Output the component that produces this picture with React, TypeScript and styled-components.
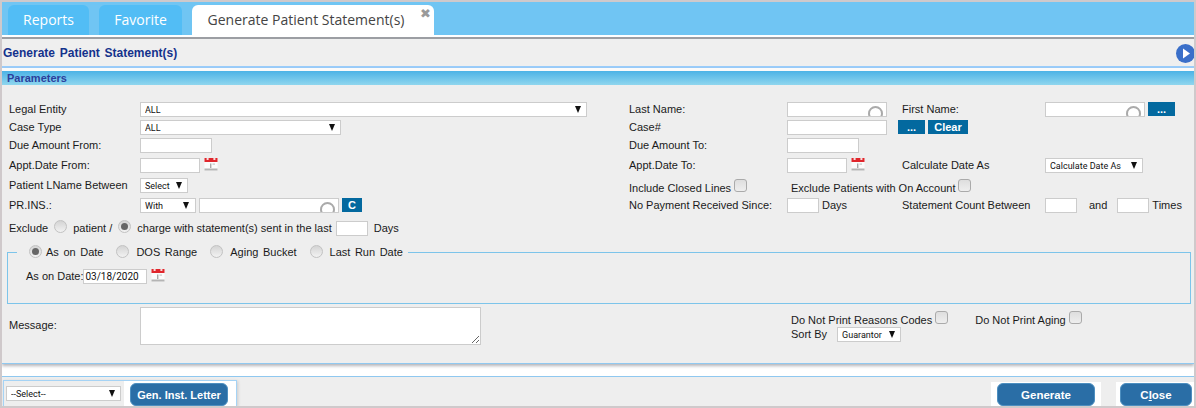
import React from "react";
import styled, { createGlobalStyle } from "styled-components";

const Global = createGlobalStyle`
  html, body { margin: 0; padding: 0; background: #fff; }
  * { box-sizing: border-box; }
`;

const sans = `"Liberation Sans", Arial, sans-serif`;

const Page = styled.div`
  width: 1196px;
  height: 408px;
  overflow: hidden;
  display: flex;
  flex-direction: column;
  background: #fff;
  border-style: solid;
  border-color: #cfc9cb;
  border-width: 2px;
  font-family: ${sans};
  font-size: 11px;
  color: #1a1a1a;
`;

const TabBar = styled.div`
  height: 33px;
  flex: none;
  display: flex;
  align-items: flex-end;
  gap: 10px;
  padding-left: 6px;
  background: #70c5f3;
`;

const Tab = styled.div<{ $active?: boolean; $w: number }>`
  position: relative;
  width: ${(p) => p.$w}px;
  height: 30px;
  padding: 0 ${(p) => (p.$active ? 14 : 0)}px 2px 0;
  display: flex;
  align-items: center;
  justify-content: center;
  border-radius: 6px 6px 0 0;
  background: ${(p) => (p.$active ? "#fff" : "#52bdf5")};
  color: ${(p) => (p.$active ? "#444" : "#fff")};
  font-family: "Open Sans", sans-serif;
  font-size: 14px;
`;

const TabClose = styled.span`
  position: absolute;
  right: 3px;
  top: 1px;
  color: #9a9a9a;
  font-size: 13px;
  font-weight: 700;
  font-family: "DejaVu Sans", sans-serif;
`;

const Rule = styled.div`
  height: 4px;
  flex: none;
  background: linear-gradient(#fff 0 2px, #9c9ea3 2px 4px);
`;

const TitleBar = styled.div`
  height: 29px;
  flex: none;
  display: flex;
  align-items: center;
  justify-content: space-between;
  background: #efefef;
  border-bottom: 2px solid #9bcdfb;
  color: #14328c;
  font-size: 12px;
  font-weight: 700;
  word-spacing: 1.4px;
  padding-left: 1px;
`;

const PlayIcon = styled.svg`
  width: 19px;
  height: 19px;
  margin-right: -1px;
  margin-top: 1px;
`;

const Panel = styled.div`
  height: 296px;
  flex: none;
  background: #eee;
  border-top: 3px solid #fafafa;
  border-bottom: 1px solid #8fc8f0;
  box-shadow: 0 2px 3px rgba(120, 120, 130, 0.55);
  position: relative;
`;

const SectionBar = styled.div`
  height: 14px;
  margin-bottom: 17px;
  padding-left: 5px;
  display: flex;
  align-items: center;
  background: linear-gradient(#4cb3e6, #8fd6ee);
  color: #2b3f9c;
  font-size: 11px;
  font-weight: 700;
`;

const Row = styled.div<{ $h: number }>`
  height: ${(p) => p.$h}px;
  margin-left: 7px;
  display: grid;
  grid-template-columns: 131px 489px 158px 115px 143px 1fr;
  align-items: start;
`;

const Cell = styled.div<{ $span?: number }>`
  grid-column: span ${(p) => p.$span ?? 1};
  display: flex;
  align-items: flex-start;
  gap: 3px;
  min-height: 15px;
`;

const Label = styled.span`
  line-height: 15px;
  white-space: nowrap;
`;

const InputBox = styled.input<{ $w: number; $h?: number }>`
  width: ${(p) => p.$w}px;
  height: ${(p) => p.$h ?? 15}px;
  flex: none;
  padding: 0 1px;
  background: #fff;
  border: 1px solid #ccc;
  outline: none;
  font-family: "Roboto", sans-serif;
  font-size: 10px;
  color: #111;
`;

const SearchWrap = styled.div<{ $w: number }>`
  position: relative;
  width: ${(p) => p.$w}px;
  height: 15px;
  flex: none;
  overflow: hidden;
  background: #fff;
  border: 1px solid #ccc;
  &::after {
    content: "";
    position: absolute;
    right: 3px;
    top: 3px;
    width: 11px;
    height: 11px;
    border: 2px solid #aaa;
    border-radius: 50%;
  }
`;

const SelectWrap = styled.div<{ $w: number; $arrow?: number }>`
  position: relative;
  width: ${(p) => p.$w}px;
  height: 15px;
  flex: none;
  background: #fff;
  border: 1px solid #ccc;
  &::after {
    content: "";
    position: absolute;
    right: ${(p) => p.$arrow ?? 5}px;
    top: 3px;
    border-left: 3.5px solid transparent;
    border-right: 3.5px solid transparent;
    border-top: 7px solid #111;
    pointer-events: none;
  }
`;

const NativeSelect = styled.select`
  appearance: none;
  width: 100%;
  height: 13px;
  display: block;
  border: 0;
  background: transparent;
  padding: 0 0 0 4px;
  outline: none;
  font-family: "Roboto", sans-serif;
  font-size: 9px;
  color: #111;
`;

const SquareButton = styled.button<{ $w: number }>`
  width: ${(p) => p.$w}px;
  height: 14px;
  flex: none;
  padding: 0;
  border: 0;
  background: #03699f;
  color: #fff;
  font-family: ${sans};
  font-size: 11px;
  line-height: 14px;
  font-weight: 700;
`;

const Calendar = styled.svg`
  width: 14px;
  height: 14px;
  flex: none;
  margin: -1px 0 0 1px;
`;

const Radio = styled.span<{ $on?: boolean }>`
  width: 13px;
  height: 13px;
  flex: none;
  display: inline-flex;
  align-items: center;
  justify-content: center;
  margin-top: -1px;
  border-radius: 50%;
  border: 1px solid #c2c2c2;
  background: linear-gradient(#d4d4d4, #f2f2f2);
  &::after {
    content: "";
    width: 7px;
    height: 7px;
    border-radius: 50%;
    background: ${(p) => (p.$on ? "#666" : "transparent")};
  }
`;

const Check = styled.span`
  width: 13px;
  height: 13px;
  flex: none;
  margin-top: 1px;
  border: 1px solid #aaa;
  border-radius: 3px;
  background: linear-gradient(#dedede, #eeeeee);
`;

const Inline = styled.div<{ $gap?: number; $ml?: number }>`
  display: flex;
  align-items: flex-start;
  gap: ${(p) => p.$gap ?? 4}px;
  margin-left: ${(p) => p.$ml ?? 0}px;
`;

const RadioLine = styled.div`
  height: 22px;
  margin-left: 7px;
  display: flex;
  align-items: flex-start;
`;

const DownLabel = styled(Label)`
  margin-top: 3px;
`;

const Fieldset = styled.fieldset`
  width: 1184px;
  height: 61px;
  margin: 0 0 3px 5px;
  padding: 0 0 0 9px;
  border: 1px solid #7cc4ea;
`;

const Legend = styled.legend`
  display: flex;
  align-items: center;
  height: 18px;
  padding: 0 5px 0 12px;
  margin-left: 0;
  word-spacing: 1.5px;
`;

const LegendItem = styled.span<{ $gap: number }>`
  display: flex;
  align-items: center;
  gap: ${(p) => p.$gap}px;
  margin-right: 13px;
  &:last-child {
    margin-right: 0;
  }
`;

const AsOnRow = styled.div`
  display: flex;
  align-items: flex-start;
  margin: 8px 0 0 9px;
`;

const MessageRow = styled.div`
  height: 48px;
  margin-left: 7px;
  display: grid;
  grid-template-columns: 131px 651px 1fr;
`;

const MessageLabel = styled(Label)`
  line-height: 18px;
  margin-top: 9px;
`;

const TextArea = styled.textarea`
  width: 341px;
  height: 38px;
  display: block;
  background: #fff;
  border: 1px solid #ccc;
  outline: none;
`;

const Options = styled.div`
  display: flex;
  flex-direction: column;
  padding-top: 3px;
`;

const OptionLine = styled.div`
  display: flex;
  align-items: flex-start;
  gap: 3px;
`;

const OptionGroup = styled.div`
  display: flex;
  align-items: flex-start;
  gap: 3px;
  margin-left: 24px;
`;

const SortLine = styled.div`
  display: flex;
  align-items: center;
  gap: 10px;
  margin-top: -1px;
`;

const Spacer = styled.div`
  height: 12px;
  flex: none;
`;

const Footer = styled.div`
  flex: 1;
  min-height: 0;
  display: flex;
  justify-content: space-between;
  background: #eee;
  border-top: 1px solid #8fc8f0;
  padding-top: 3px;
`;

const LetterBox = styled.div`
  width: 234px;
  margin-left: 1px;
  display: flex;
  background: #fff;
  border: 1px solid #a5d3f5;
  border-bottom: 0;
  box-shadow: 1px 1px 3px rgba(0, 0, 0, 0.15);
`;

const LetterSelectArea = styled.div`
  width: 120px;
  flex: none;
  background: #eee;
  padding: 5px 0 0 2px;
`;

const LetterButtonArea = styled.div`
  padding: 2px 0 0 6px;
`;

const ActionSlot = styled.div<{ $w: number; $mr: number; $pl: number }>`
  width: ${(p) => p.$w}px;
  margin: 2px ${(p) => p.$mr}px 0 0;
  display: flex;
  padding: 1px 0 0 ${(p) => p.$pl}px;
  background: #fff;
`;

const ActionButton = styled.button<{ $w: number; $size?: number }>`
  width: ${(p) => p.$w}px;
  height: 23px;
  padding: 0;
  border: 1px solid #4d8fc0;
  border-radius: 6px;
  background: #2a6ea6;
  color: #fff;
  font-family: ${sans};
  font-size: ${(p) => p.$size ?? 11.5}px;
  font-weight: 700;
`;

const Actions = styled.div`
  display: flex;
  align-items: stretch;
`;

const Und = styled.span`
  text-decoration: underline;
`;

const CalendarIcon = () => (
  <Calendar viewBox="0 0 14 14">
    <rect x="0.5" y="1" width="13" height="12.5" fill="#fbfbfb" />
    <rect x="0.5" y="11.5" width="13" height="2" fill="#b4b4b4" />
    <rect x="0.5" y="1" width="13" height="4" fill="#e0262c" />
    <rect x="2.6" y="1" width="2" height="2" fill="#f6dcdc" />
    <rect x="9.4" y="1" width="2" height="2" fill="#f6dcdc" />
    <rect x="6" y="6.5" width="1.4" height="4.5" fill="#a8a8a8" />
    <rect x="8.5" y="6.5" width="2.5" height="1.2" fill="#c5c5c5" />
  </Calendar>
);

const Select = ({ w, text, arrow }: { w: number; text: string; arrow?: number }) => (
  <SelectWrap $w={w} $arrow={arrow}>
    <NativeSelect defaultValue={text}>
      <option>{text}</option>
    </NativeSelect>
  </SelectWrap>
);

export default function App() {
  return (
    <Page>
      <Global />
      <TabBar>
        <Tab $w={81}>Reports</Tab>
        <Tab $w={83}>Favorite</Tab>
        <Tab $w={242} $active>
          Generate Patient Statement(s)
          <TabClose>✖</TabClose>
        </Tab>
      </TabBar>
      <Rule />
      <TitleBar>
        Generate Patient Statement(s)
        <PlayIcon viewBox="0 0 19 19">
          <circle cx="9.5" cy="9.5" r="9.5" fill="#3a6fc9" />
          <path d="M7 4.5 L14 9.5 L7 14.5 Z" fill="#fff" />
        </PlayIcon>
      </TitleBar>
      <Panel>
        <SectionBar>Parameters</SectionBar>
        <Row $h={18}>
          <Cell><Label>Legal Entity</Label></Cell>
          <Cell><Select w={447} text="ALL" /></Cell>
          <Cell><Label>Last Name:</Label></Cell>
          <Cell><SearchWrap $w={100} /></Cell>
          <Cell><Label>First Name:</Label></Cell>
          <Cell><SearchWrap $w={100} /><SquareButton $w={27}>...</SquareButton></Cell>
        </Row>
        <Row $h={18}>
          <Cell><Label>Case Type</Label></Cell>
          <Cell><Select w={201} text="ALL" /></Cell>
          <Cell><Label>Case#</Label></Cell>
          <Cell $span={2}>
            <InputBox $w={100} />
            <Inline $gap={3} $ml={8}>
              <SquareButton $w={27}>...</SquareButton>
              <SquareButton $w={40}>Clear</SquareButton>
            </Inline>
          </Cell>
        </Row>
        <Row $h={20}>
          <Cell><Label>Due Amount From:</Label></Cell>
          <Cell><InputBox $w={72} /></Cell>
          <Cell><Label>Due Amount To:</Label></Cell>
          <Cell><InputBox $w={72} /></Cell>
        </Row>
        <Row $h={20}>
          <Cell><Label>Appt.Date From:</Label></Cell>
          <Cell><InputBox $w={60} /><CalendarIcon /></Cell>
          <Cell><Label>Appt.Date To:</Label></Cell>
          <Cell><InputBox $w={60} /><CalendarIcon /></Cell>
          <Cell><Label>Calculate Date As</Label></Cell>
          <Cell><Select w={98} text="Calculate Date As" /></Cell>
        </Row>
        <Row $h={20}>
          <Cell><Label>Patient LName Between</Label></Cell>
          <Cell><Select w={48} text="Select" /></Cell>
          <Cell><Inline $gap={3}><DownLabel>Include Closed Lines</DownLabel><Check /></Inline></Cell>
          <Cell $span={3}>
            <Inline $gap={3} $ml={4}><DownLabel>Exclude Patients with On Account</DownLabel><Check /></Inline>
          </Cell>
        </Row>
        <Row $h={23}>
          <Cell><Label>PR.INS.:</Label></Cell>
          <Cell>
            <Select w={56} text="With" arrow={6} />
            <SearchWrap $w={140} />
            <SquareButton $w={20}>C</SquareButton>
          </Cell>
          <Cell><Label>No Payment Received Since:</Label></Cell>
          <Cell><InputBox $w={32} /><Label>Days</Label></Cell>
          <Cell><Label>Statement Count Between</Label></Cell>
          <Cell>
            <InputBox $w={32} />
            <Inline $gap={10} $ml={9}><Label>and</Label><InputBox $w={32} /></Inline>
            <Label>Times</Label>
          </Cell>
        </Row>
        <RadioLine>
          <Inline $gap={6}>
            <Label>Exclude</Label>
            <Radio />
            <Label>patient /</Label>
            <Radio $on />
            <Inline $gap={4}>
              <Label>charge with statement(s) sent in the last</Label>
              <InputBox $w={32} />
            </Inline>
            <Label>Days</Label>
          </Inline>
        </RadioLine>
        <Fieldset>
          <Legend>
            <LegendItem $gap={4}><Radio $on />As on Date</LegendItem>
            <LegendItem $gap={7}><Radio />DOS Range</LegendItem>
            <LegendItem $gap={7}><Radio />Aging Bucket</LegendItem>
            <LegendItem $gap={7}><Radio />Last Run Date</LegendItem>
          </Legend>
          <AsOnRow>
            <Label>As on Date:</Label>
            <InputBox $w={64} defaultValue="03/18/2020" />
            <Inline $ml={3}><CalendarIcon /></Inline>
          </AsOnRow>
        </Fieldset>
        <MessageRow>
          <MessageLabel>Message:</MessageLabel>
          <TextArea />
          <Options>
            <OptionLine>
              <DownLabel>Do Not Print Reasons Codes</DownLabel>
              <Check />
              <OptionGroup>
                <DownLabel>Do Not Print Aging</DownLabel>
                <Check />
              </OptionGroup>
            </OptionLine>
            <SortLine>
              <Label>Sort By</Label>
              <Select w={64} text="Guarantor" />
            </SortLine>
          </Options>
        </MessageRow>
      </Panel>
      <Spacer />
      <Footer>
        <LetterBox>
          <LetterSelectArea><Select w={115} text="--Select--" /></LetterSelectArea>
          <LetterButtonArea><ActionButton $w={98} $size={11}>Gen. Inst. Letter</ActionButton></LetterButtonArea>
        </LetterBox>
        <Actions>
          <ActionSlot $w={110} $mr={15} $pl={6}><ActionButton $w={98}>Generate</ActionButton></ActionSlot>
          <ActionSlot $w={78} $mr={0} $pl={4}><ActionButton $w={72}>C<Und>l</Und>ose</ActionButton></ActionSlot>
        </Actions>
      </Footer>
    </Page>
  );
}
